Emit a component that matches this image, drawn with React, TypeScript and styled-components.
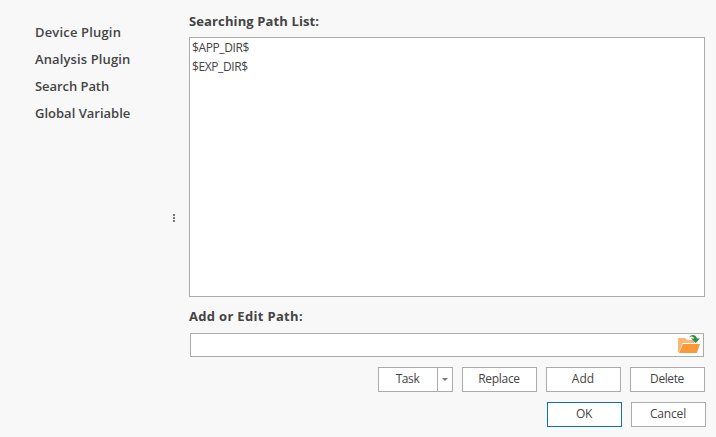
import React from 'react';
import styled, { createGlobalStyle } from 'styled-components';

const GlobalStyle = createGlobalStyle`
  * { box-sizing: border-box; }
  body {
    margin: 0;
    background: #f8f8f8;
    color: #444;
    font-family: "Open Sans", "Noto Sans", sans-serif;
    font-size: 12px;
  }
`;

const Dialog = styled.div`
  display: flex;
  width: 716px;
  height: 437px;
  overflow: hidden;
  background: #f8f8f8;
`;

const Sidebar = styled.nav`
  display: flex;
  flex-direction: column;
  width: 167px;
  padding: 19px 0 0 35px;
`;

const NavItem = styled.a<{ $spacing: number }>`
  height: 27px;
  line-height: 27px;
  font-size: 13px;
  font-weight: 600;
  letter-spacing: ${(p) => p.$spacing}px;
  white-space: nowrap;
`;

const Splitter = styled.div`
  display: flex;
  flex-direction: column;
  gap: 1px;
  width: 22px;
  padding: 214px 0 0 6px;
`;

const Grip = styled.span`
  width: 2px;
  height: 2px;
  background: #777;
`;

const Content = styled.main`
  display: flex;
  flex-direction: column;
  width: 527px;
`;

const Heading = styled.h2<{ $top: number; $height: number; $spacing: number }>`
  margin: ${(p) => p.$top}px 0 0;
  height: ${(p) => p.$height}px;
  line-height: 20px;
  font-size: 13px;
  font-weight: 700;
  letter-spacing: ${(p) => p.$spacing}px;
  white-space: nowrap;
`;

const PathList = styled.ul`
  width: 516px;
  height: 260px;
  margin: 0;
  padding: 0 2px;
  list-style: none;
  border: 1px solid #ababab;
  background: #fff;
`;

const PathItem = styled.li`
  height: 19px;
  line-height: 19px;
  letter-spacing: -0.4px;
`;

const PathField = styled.div`
  display: flex;
  justify-content: flex-end;
  width: 514px;
  height: 24px;
  margin-left: 1px;
  padding-right: 2px;
  border: 1px solid #ababab;
  background: #fff;
`;

const ButtonRow = styled.div<{ $shift?: number }>`
  display: flex;
  justify-content: flex-end;
  gap: 9px;
  margin-top: 10px;
  padding-right: ${(p) => 11 - (p.$shift ?? 0)}px;
`;

const Button = styled.button<{ $primary?: boolean; $spacing?: number }>`
  width: 75px;
  height: 25px;
  padding: 0 1px 1px 0;
  border: 1px solid ${(p) => (p.$primary ? '#106ebe' : '#ababab')};
  background: #fff;
  color: inherit;
  font: inherit;
  line-height: 22px;
  letter-spacing: ${(p) => p.$spacing ?? 0}px;
`;

const SplitButton = styled.div`
  display: flex;
  width: 75px;
  height: 25px;
  border: 1px solid #ababab;
  background: #fff;
`;

const SplitLabel = styled.span`
  width: 58px;
  padding-right: 1px;
  line-height: 22px;
  letter-spacing: -0.4px;
  text-align: center;
`;

const SplitArrow = styled.span`
  display: flex;
  flex: 1;
  align-items: center;
  justify-content: center;
  border-left: 1px solid #ababab;
`;

const FolderIcon = () => (
  <svg width="24" height="22" viewBox="0 0 24 22">
    <path d="M1 18V4h7l2 2h7v3H5.5L2.2 18z" fill="#fcb573" />
    <path d="M5.8 10H23l-3.2 9H2z" fill="#fb983b" />
    <path d="M12 3.5C14 0 19 .2 20 4.5h3L18.8 9 14 4.5h3.2C16.5 2 14 1.8 12 3.5z" fill="#30904a" />
  </svg>
);

const pages = [
  { label: 'Device Plugin', spacing: 0.17 },
  { label: 'Analysis Plugin', spacing: 0.12 },
  { label: 'Search Path', spacing: -0.06 },
  { label: 'Global Variable', spacing: 0 },
];

export default function App() {
  return (
    <>
      <GlobalStyle />
      <Dialog>
        <Sidebar>
          {pages.map((p) => (
            <NavItem key={p.label} $spacing={p.spacing}>{p.label}</NavItem>
          ))}
        </Sidebar>
        <Splitter>
          <Grip />
          <Grip />
          <Grip />
        </Splitter>
        <Content>
          <Heading $top={11} $height={26} $spacing={0.12}>Searching Path List:</Heading>
          <PathList>
            <PathItem>$APP_DIR$</PathItem>
            <PathItem>$EXP_DIR$</PathItem>
          </PathList>
          <Heading $top={9} $height={27} $spacing={0.32}>Add or Edit Path:</Heading>
          <PathField>
            <FolderIcon />
          </PathField>
          <ButtonRow>
            <SplitButton>
              <SplitLabel>Task</SplitLabel>
              <SplitArrow>
                <svg width="6" height="3" viewBox="0 0 6 3">
                  <path d="M0 0h6L3 3z" fill="#777" />
                </svg>
              </SplitArrow>
            </SplitButton>
            <Button $spacing={-0.3}>Replace</Button>
            <Button>Add</Button>
            <Button $spacing={-0.4}>Delete</Button>
          </ButtonRow>
          <ButtonRow $shift={1}>
            <Button $primary $spacing={-0.3}>OK</Button>
            <Button $spacing={-0.15}>Cancel</Button>
          </ButtonRow>
        </Content>
      </Dialog>
    </>
  );
}
